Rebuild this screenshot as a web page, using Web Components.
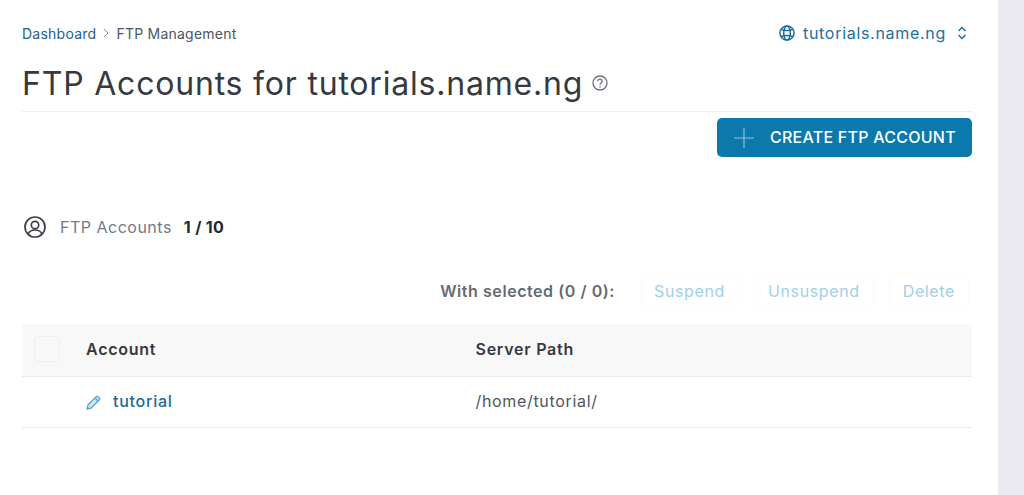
<!DOCTYPE html>
<html lang="en">
<head>
<meta charset="UTF-8" />
<title>FTP Accounts</title>
<style>
  html, body { margin: 0; height: 100%; background: #e9e9ef; overflow: hidden; }
  body { font-family: Inter, "Liberation Sans", sans-serif; color: #36393f; }
  ftp-page { height: 495px; width: 998px; }
</style>
</head>
<body>
<ftp-page>
  <page-head slot="head" domain="tutorials.name.ng"></page-head>
  <ftp-toolbar slot="main"></ftp-toolbar>
  <ftp-table slot="main"></ftp-table>
</ftp-page>

<script>
  // page shell, white panel with the grey strip on the right
  class FtpPage extends HTMLElement {
    constructor() {
      super();
      this.attachShadow({ mode: 'open' });
      this.shadowRoot.innerHTML = `
        <style>
          :host { display: block; background: #fff; box-sizing: border-box; padding: 0 26px 0 22px; }
        </style>
        <slot name="head"></slot>
        <slot name="main"></slot>
      `;
    }
  }

  class PageHead extends HTMLElement {
    constructor() {
      super();
      this.attachShadow({ mode: 'open' });
    }
    connectedCallback() {
      const domain = this.getAttribute('domain');
      this.shadowRoot.innerHTML = `
        <style>
          :host { display: block; }
          .top { display: flex; justify-content: space-between; align-items: center; height: 20px; padding-top: 23px; }
          .crumbs { display: flex; align-items: center; font-size: 14px; letter-spacing: .24px; color: #4b5563; }
          .crumbs a { color: #1f6187; }
          .crumbs svg { margin: 0 6px 0 6px; }
          .domain { display: flex; align-items: center; color: #1c6f9f; font-size: 16px; letter-spacing: .7px; padding-right: 5px; }
          .domain .globe { margin-right: 8px; }
          .domain .updown { margin-left: 11px; }
          h1 { margin: 0; font-weight: 400; font-size: 32px; line-height: 40px; letter-spacing: .8px; color: #36393f; display: flex; align-items: center; padding-top: 17px; height: 51px; border-bottom: 1px solid #efeff1; }
          h1 span { display: block; margin-top: -4px; }
          h1 svg { margin-left: 9px; margin-top: -6px; }
        </style>
        <div class="top">
          <div class="crumbs"><a>Dashboard</a>
            <svg width="8" height="10" viewBox="0 0 8 10" fill="none" stroke="#8a8f98" stroke-width="1"><path d="M2 1l4 4-4 4"/></svg>
            <span>FTP Management</span></div>
          <div class="domain">
            <svg class="globe" width="16" height="16" viewBox="0 0 16 16" fill="none" stroke="#1c6f9f" stroke-width="1.500"><circle cx="8" cy="8" r="7.100"/><ellipse cx="8" cy="8" rx="3.300" ry="7.100"/><path d="M2 4.400q6 2.400 12 0M2 11.600q6-2.400 12 0"/></svg>
            <span>${domain}</span>
            <svg class="updown" width="10" height="14" viewBox="0 0 10 14" fill="none" stroke="#1c6f9f" stroke-width="1.500"><path d="M1.500 5l3.500-3.500L8.500 5M1.500 9l3.500 3.500L8.500 9"/></svg>
          </div>
        </div>
        <h1><span>FTP Accounts for ${domain}</span>
          <svg width="16" height="16" viewBox="0 0 16 16" fill="none" stroke="#6b7078" stroke-width="1.300"><circle cx="8" cy="8" r="7"/><path d="M5.800 6.300a2.200 2.200 0 1 1 3.300 1.900c-.7.400-1.100.8-1.100 1.700"/><path d="M8 11.100v1.400"/></svg>
        </h1>
      `;
    }
  }

  // create button, quota line and the bulk actions
  class FtpToolbar extends HTMLElement {
    constructor() {
      super();
      this.attachShadow({ mode: 'open' });
      this.shadowRoot.innerHTML = `
        <style>
          :host { display: block; }
          .create-row { display: flex; justify-content: flex-end; padding-top: 6px; }
          .create { display: flex; align-items: center; height: 39px; width: 255px; box-sizing: border-box; padding: 0 0 1px 16px; background: #0c79ad; border-radius: 5px; color: #fff; font-size: 16px; font-weight: 500; letter-spacing: .25px; }
          .create svg { margin: 1px 15px 0 0; }
          .quota { display: flex; align-items: center; margin-top: 57px; height: 26px; font-size: 16px; color: #747a84; letter-spacing: .5px; }
          .quota svg { margin-right: 13px; margin-left: 1px; }
          .quota b { margin-left: 12px; color: #23262b; font-weight: 700; letter-spacing: .3px; }
          .bulk { display: flex; justify-content: flex-end; align-items: center; margin-top: 34px; height: 34px; padding-right: 3px; font-size: 16px; }
          .bulk strong { color: #656a73; font-weight: 600; letter-spacing: .56px; margin-right: 13px; }
          .bulk span { display: flex; align-items: center; height: 34px; padding: 0 13px; border: 1px solid #fbfbfb; border-radius: 6px; color: #a3cfe8; margin-left: 15px; letter-spacing: .63px; box-sizing: border-box; }
          .bulk span:first-of-type { margin-left: 13px; padding: 0 13px 0 12px; }
        </style>
        <div class="create-row">
          <div class="create">
            <svg width="22" height="22" viewBox="0 0 22 22" stroke="#8fc0da" stroke-width="1.200" fill="none"><path d="M11 1v20M1 11h20"/></svg>
            CREATE FTP ACCOUNT
          </div>
        </div>
        <div class="quota">
          <svg width="24" height="24" viewBox="0 0 24 24" fill="none" stroke="#3c4046" stroke-width="1.700"><circle cx="12" cy="12" r="10"/><circle cx="12" cy="10" r="3.700"/><path d="M5 19c1.300-3 4-4 7-4s5.700 1 7 4"/></svg>
          FTP Accounts <b>1 / 10</b>
        </div>
        <div class="bulk">
          <strong>With selected (0 / 0):</strong>
          <span>Suspend</span><span>Unsuspend</span><span>Delete</span>
        </div>
      `;
    }
  }

  class FtpRow extends HTMLElement {
    constructor() {
      super();
      this.attachShadow({ mode: 'open' });
      this.shadowRoot.innerHTML = `
        <style>
          :host { display: grid; grid-template-columns: 64px 389.500px 1fr; align-items: center; font-size: 16px; border-bottom: 1px solid #e9e9ee; box-sizing: border-box; padding-bottom: 2px; }
          :host([head]) { height: 53px; background: #f8f8f8; font-weight: 600; color: #36393f; letter-spacing: .75px; }
          :host(:not([head])) { height: 51px; color: #50555c; letter-spacing: .67px; }
        </style>
        <div><slot name="check"></slot></div>
        <div><slot name="name"></slot></div>
        <div><slot name="path"></slot></div>
      `;
    }
  }

  class FtpTable extends HTMLElement {
    constructor() {
      super();
      this.attachShadow({ mode: 'open' });
      this.shadowRoot.innerHTML = `
        <style>
          :host { display: block; margin-top: 16px; }
          .check { display: block; width: 26px; height: 26px; margin-left: 12px; box-sizing: border-box; border: 1px solid #efeff1; border-radius: 5px; }
          .name { display: flex; align-items: center; color: #176b98; font-weight: 500; letter-spacing: .75px; }
          .name svg { margin: 2px 12px 0 0; }
        </style>
        <ftp-row head>
          <span slot="check" class="check"></span>
          <span slot="name">Account</span>
          <span slot="path">Server Path</span>
        </ftp-row>
        <ftp-row>
          <span slot="name" class="name">
            <svg width="15" height="15" viewBox="0 0 15 15" fill="#cfe5f2" stroke="#5ba5cd" stroke-width="1.300" stroke-linejoin="round"><path d="M1 14l1-4.200L10.200 1.600a1.300 1.300 0 0 1 1.800 0l1.400 1.400a1.300 1.300 0 0 1 0 1.800L5.200 13z"/><path d="M9 3l3 3" fill="none"/></svg>
            tutorial</span>
          <span slot="path">/home/tutorial/</span>
        </ftp-row>
      `;
    }
  }

  customElements.define('ftp-page', FtpPage);
  customElements.define('page-head', PageHead);
  customElements.define('ftp-toolbar', FtpToolbar);
  customElements.define('ftp-row', FtpRow);
  customElements.define('ftp-table', FtpTable);
</script>
</body>
</html>
